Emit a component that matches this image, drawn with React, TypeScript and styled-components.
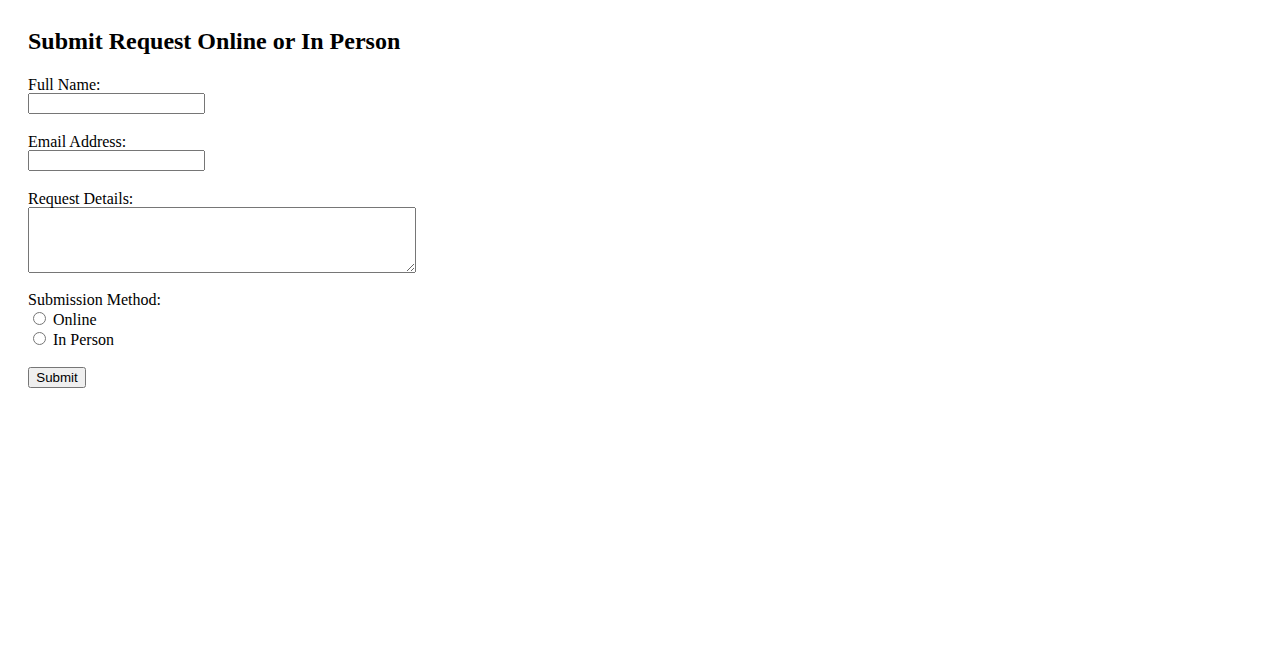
import React from "react";
import styled, { createGlobalStyle } from "styled-components";

const Global = createGlobalStyle`
  html, body { margin: 0; padding: 0; background: #fff; }
  body { font-family: "Liberation Serif", "Times New Roman", serif; font-size: 16px; color: #000; }
`;

const Page = styled.div`
  padding: 28px;
`;

const Title = styled.h2`
  margin: 0 0 20px 0;
  font-size: 24px;
  font-weight: bold;
  line-height: 26px;
  font-family: "Liberation Serif", "Times New Roman", serif;
`;

const Field = styled.div<{ $gap?: number }>`
  margin-bottom: ${(p) => (p.$gap ?? 17)}px;
`;

const Label = styled.label`
  display: block;
  line-height: 18px;
  height: 18px;
  padding-top: 2px;
  margin-bottom: -1px;
`;

const TextInput = styled.input`
  display: block;
  box-sizing: border-box;
  width: 177px;
  height: 21px;
  margin: 0;
  font-family: "Liberation Sans", Arial, sans-serif;
  font-size: 13.333px;
`;

const TextArea = styled.textarea`
  display: block;
  box-sizing: border-box;
  width: 388px;
  height: 66px;
  margin: 0;
  font-family: "Liberation Mono", monospace;
  font-size: 13.333px;
`;

const GroupLabel = styled.div`
  line-height: 18px;
  height: 18px;
`;

const RadioRow = styled.label`
  display: block;
  line-height: normal;
`;

const Radio = styled.input`
  margin: 3px 3px 0 5px;
  width: 13px;
  height: 13px;
`;

const SubmitButton = styled.button`
  display: block;
  box-sizing: border-box;
  width: 58px;
  height: 21px;
  margin: 0;
  padding: 1px 6px;
  font-family: "Liberation Sans", Arial, sans-serif;
  font-size: 13.333px;
`;

export default function App() {
  return (
    <>
      <Global />
      <Page>
        <Title>Submit Request Online or In Person</Title>
        <form onSubmit={(e) => e.preventDefault()}>
          <Field>
            <Label htmlFor="name">Full Name:</Label>
            <TextInput id="name" type="text" />
          </Field>
          <Field>
            <Label htmlFor="email">Email Address:</Label>
            <TextInput id="email" type="email" />
          </Field>
          <Field $gap={18}>
            <Label htmlFor="details">Request Details:</Label>
            <TextArea id="details" rows={4} cols={50} />
          </Field>
          <Field $gap={18}>
            <GroupLabel>Submission Method:</GroupLabel>
            <RadioRow>
              <Radio type="radio" name="method" value="online" /> Online
            </RadioRow>
            <RadioRow>
              <Radio type="radio" name="method" value="inperson" /> In Person
            </RadioRow>
          </Field>
          <SubmitButton type="submit">Submit</SubmitButton>
        </form>
      </Page>
    </>
  );
}
